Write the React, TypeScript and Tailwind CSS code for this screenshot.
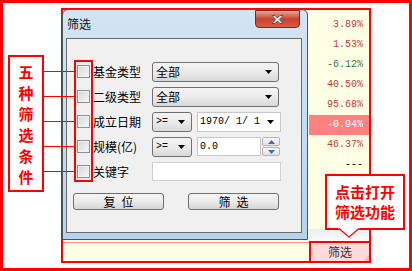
import React from "react";

const cjk = "font-['Noto_Sans_CJK_SC',sans-serif]";
const mono = "font-['Liberation_Mono','Noto_Sans_CJK_SC',monospace]";

type Val = { text: string; tone: "up" | "down" | "flat"; active?: boolean };

const values: Val[] = [
  { text: "3.89%", tone: "up" },
  { text: "1.53%", tone: "up" },
  { text: "-6.12%", tone: "down" },
  { text: "40.50%", tone: "up" },
  { text: "95.68%", tone: "up" },
  { text: "-0.94%", tone: "down", active: true },
  { text: "46.37%", tone: "up" },
  { text: "---", tone: "flat" },
];

const toneClass = {
  up: "text-[#c23b3b]",
  down: "text-[#2f7d4a]",
  flat: "text-black",
};

function Arrow() {
  return (
    <svg width="7" height="4" viewBox="0 0 7 4">
      <path d="M0 0h7L3.5 4z" fill="#000" />
    </svg>
  );
}

function Check() {
  return (
    <div className="w-[13px] h-[13px] shrink-0 border border-[#8f8f8f] bg-gradient-to-br from-[#d6d6d6] to-[#f7f7f7] shadow-[inset_0_0_0_1px_#f2f2f2]" />
  );
}

function Combo({ label, width, isMono }: { label: string; width: string; isMono?: boolean }) {
  return (
    <div
      className={`h-[20px] ${width} shrink-0 flex items-center justify-between pl-[3px] pr-[6px] rounded-[3px] border border-[#707070] bg-gradient-to-b from-[#f4f4f4] via-[#ebebeb] to-[#d8d8d8]`}
    >
      <span className={`${isMono ? mono + " text-[10px]" : "text-[12px]"} leading-none text-black`}>{label}</span>
      <Arrow />
    </div>
  );
}

function Label({ children }: { children: React.ReactNode }) {
  return <span className="ml-[3px] w-[59px] shrink-0 text-[12px] leading-none text-black whitespace-nowrap">{children}</span>;
}

function SpinBtn({ up }: { up?: boolean }) {
  return (
    <div className="h-[9px] flex items-center justify-center border border-[#b5b5b5] rounded-[2px] bg-gradient-to-b from-[#fafafa] to-[#e2e2e2]">
      <svg width="7" height="4" viewBox="0 0 7 4">
        <path d={up ? "M0 4h7L3.5 0z" : "M0 0h7L3.5 4z"} fill="#4a6a9e" />
      </svg>
    </div>
  );
}

function WinButton({ a, b }: { a: string; b: string }) {
  return (
    <button className="w-[91px] h-[17px] flex items-center justify-center gap-[6px] rounded-[3px] border border-[#707070] bg-gradient-to-b from-[#f5f5f5] via-[#ebebeb] to-[#d5d5d5] text-[12px] leading-none text-black">
      <span>{a}</span>
      <span>{b}</span>
    </button>
  );
}

function FilterDialog() {
  return (
    <div className="absolute left-[-1px] top-[-1px] w-[246px] h-[231px] flex flex-col rounded-t-[6px] border border-[#4b5663] bg-gradient-to-b from-[#d3e5f4] via-[#c6ddf1] to-[#b6d2ec] pl-[3px] pr-[5px] pb-[6px]">
      {/* title bar */}
      <div className="h-[28px] flex items-start">
        <span className="mt-[7px] ml-[1px] text-[12px] leading-[14px] text-[#111]">筛选</span>
        <div className="ml-auto mr-[2px] w-[45px] h-[18px] flex items-center justify-center rounded-b-[4px] border border-[#7b2a1f] bg-gradient-to-b from-[#e8a595] via-[#c8412f] to-[#db5a40]">
          <svg width="15" height="11" viewBox="0 0 15 11">
            <path d="M2 1.5h3l2.5 2.6L10 1.5h3L9.2 5.5 13 9.5h-3L7.5 6.9 5 9.5H2l3.8-4z" fill="#fff" stroke="#5a4a48" strokeWidth="0.9" />
          </svg>
        </div>
      </div>
      {/* body */}
      <div className="flex-1 border border-[#6c6c6c] bg-[#f0f0f0] pt-[20px]">
        <div className="pl-[10px]">
          <div className="h-[25px] flex items-center">
            <Check />
            <Label>基金类型</Label>
            <Combo label="全部" width="w-[127px]" />
          </div>
          <div className="h-[25px] flex items-center">
            <Check />
            <Label>二级类型</Label>
            <Combo label="全部" width="w-[127px]" />
          </div>
          <div className="h-[25px] flex items-center">
            <Check />
            <Label>成立日期</Label>
            <Combo label=">=" width="w-[40px]" isMono />
            <div className="ml-[5px] w-[84px] h-[20px] flex items-center justify-between pl-[2px] pr-[6px] bg-white border border-[#c8c8c8]">
              <span className={`${mono} text-[10px] leading-none whitespace-pre text-black`}>1970/ 1/ 1</span>
              <Arrow />
            </div>
          </div>
          <div className="h-[25px] flex items-center">
            <Check />
            <Label>规模(亿)</Label>
            <Combo label=">=" width="w-[40px]" isMono />
            <div className="ml-[5px] w-[64px] h-[19px] flex items-center pl-[2px] bg-white border border-[#c8c8c8]">
              <span className={`${mono} text-[10px] leading-none text-black`}>0.0</span>
            </div>
            <div className="ml-[1px] w-[18px] flex flex-col gap-[1px]">
              <SpinBtn up />
              <SpinBtn />
            </div>
          </div>
          <div className="h-[25px] flex items-center">
            <Check />
            <Label>关键字</Label>
            <div className="w-[129px] h-[19px] bg-white border border-[#d0d0d0]" />
          </div>
        </div>
        <div className="mt-[9px] pl-[6px] flex gap-[24px]">
          <WinButton a="复" b="位" />
          <WinButton a="筛" b="选" />
        </div>
      </div>
    </div>
  );
}

export default function App() {
  return (
    <div className={`relative w-[412px] h-[271px] border-[3px] border-[#ff0000] bg-white pl-[58px] pt-[5px] ${cjk}`}>
      {/* app window */}
      <div className="w-[310px] h-[255px] border-2 border-[#ff0000] bg-[#ffffe6] flex flex-col">
        <div className="h-[232px] flex">
          <div className="relative flex-1">
            <FilterDialog />
          </div>
          <div className="w-[60px] flex flex-col pt-[5px]">
            {values.map((v) => (
              <div
                key={v.text}
                className={`h-[20px] flex items-center justify-end pr-[6px] ${v.active ? "bg-[#ff8080]" : ""}`}
              >
                <span className={`${mono} text-[10px] leading-none ${v.active ? "text-white" : toneClass[v.tone]}`}>{v.text}</span>
              </div>
            ))}
            <div className="flex-1" />
            <div className="h-[13px] bg-gradient-to-b from-[#eceef3] to-[#fbfbfc]" />
          </div>
        </div>
        <div className="flex-1 flex border-t border-[#ff9090]">
          <div className="flex-1" />
          <div className="relative w-[62px] -mt-[2px] -mr-[2px] -mb-[2px] flex items-center justify-center border-2 border-[#ff0000] bg-[#ffdada] text-[12px] leading-none text-[#333]">
            筛选
            <svg className="absolute right-0 bottom-0" width="6" height="6" viewBox="0 0 6 6">
              <path d="M6 0V6H0z" fill="#ffb4b4" />
            </svg>
          </div>
        </div>
      </div>

      {/* annotation: five filter conditions */}
      <div className="absolute left-[5px] top-[52px] w-[36px] h-[137px] border-2 border-[#ff0000] bg-white flex flex-col items-center justify-center">
        {["五", "种", "筛", "选", "条", "件"].map((c) => (
          <span key={c} className="h-[21px] text-[15px] leading-[21px] font-bold text-[#ff0000]">
            {c}
          </span>
        ))}
      </div>
      <div className="absolute left-[40px] top-[68px] w-[32px] h-[1px] bg-[#ff0000]" />
      <div className="absolute left-[40px] top-[93px] w-[32px] h-[1px] bg-[#ff0000]" />
      <div className="absolute left-[40px] top-[118px] w-[32px] h-[1px] bg-[#ff0000]" />
      <div className="absolute left-[40px] top-[143px] w-[32px] h-[1px] bg-[#ff0000]" />
      <div className="absolute left-[40px] top-[168px] w-[32px] h-[1px] bg-[#ff0000]" />
      <div className="absolute left-[71px] top-[57px] w-[19px] h-[122px] border-2 border-[#ff0000]" />

      {/* annotation: open filter */}
      <div className="absolute left-[322px] top-[171px] w-[80px] h-[56px] border-2 border-[#ff0000] bg-white flex flex-col items-center justify-center">
        <span className="text-[15px] leading-[20px] font-bold text-[#ff0000]">点击打开</span>
        <span className="text-[15px] leading-[20px] font-bold text-[#ff0000]">筛选功能</span>
      </div>
      <svg className="absolute left-[335px] top-[225px]" width="22" height="11" viewBox="0 0 22 11">
        <path d="M0 0H22L11 9z" fill="#fff" />
        <path d="M1 0.5L11 9L21 0.5" fill="none" stroke="#ff0000" strokeWidth="1.3" />
      </svg>
    </div>
  );
}
